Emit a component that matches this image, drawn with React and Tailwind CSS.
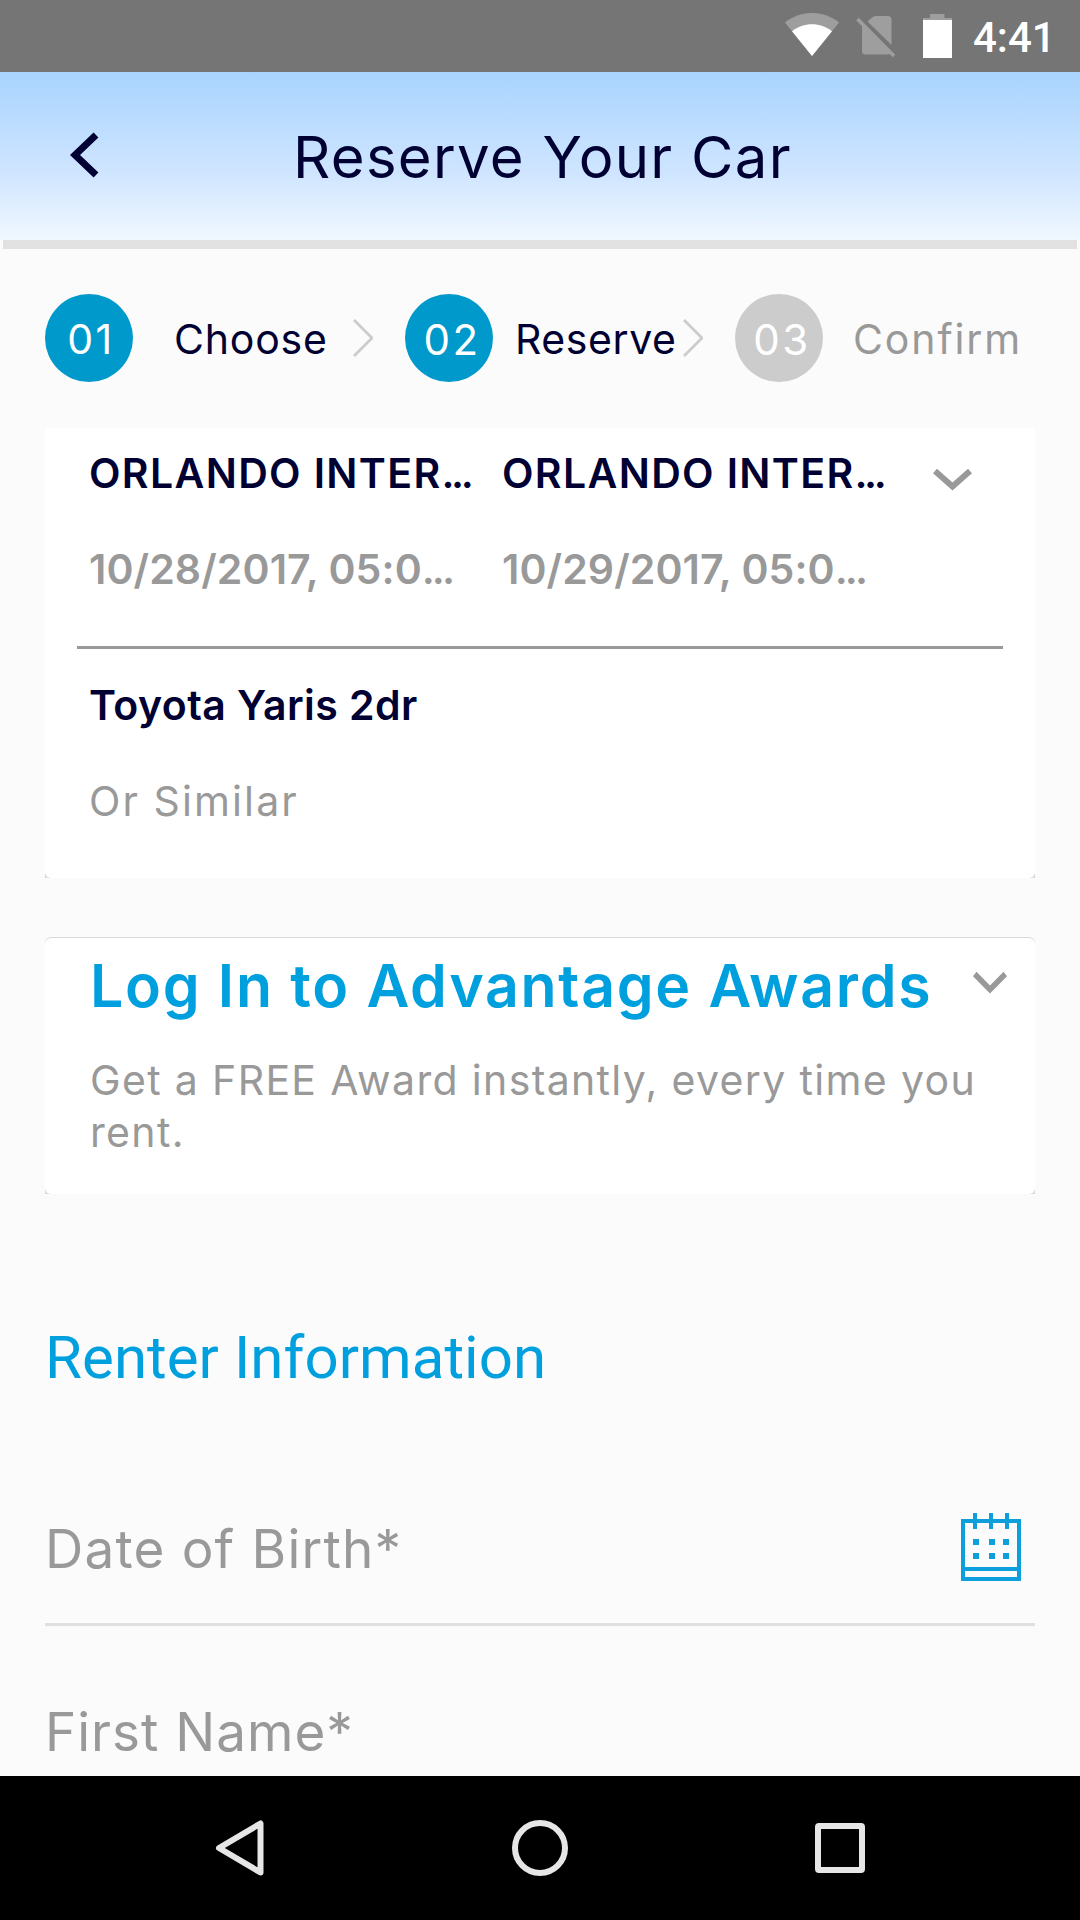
const steps = [
    { id: "01", label: "Choose", active: true, circle: "pl-1 text-[41px] tracking-[2.5px]", text: "ml-[41px] w-[179px] tracking-[0.8px]" },
    { id: "02", label: "Reserve", active: true, circle: "pl-1.5 text-[42px] tracking-[2.5px]", text: "ml-[22px] w-[168px] tracking-[0.57px]" },
    { id: "03", label: "Confirm", active: false, circle: "pl-1.5 text-[42px] tracking-[2.5px]", text: "ml-[30px] tracking-[1.9px]" },
];

const trips = [
    { place: "ORLANDO INTER", date: "10/28/2017, 05:0" },
    { place: "ORLANDO INTER", date: "10/29/2017, 05:0" },
];

function StatusBar() {
    return (
        <div className="h-[72px] bg-[#757575] flex items-center">
            <svg className="ml-[785px] mb-[2px] w-[54px] h-[44px] shrink-0" viewBox="0 0 54 44">
                <path d="M27 43 L0 9.5 C16 -3.2 38 -3.2 54 9.5 Z" fill="#9e9e9e" />
                <path d="M27 43 L7 18.3 C18.5 9 35.5 9 47 18.3 Z" fill="#fff" />
            </svg>

            <svg className="ml-[17px] mt-[2px] w-[40px] h-[42px] shrink-0" viewBox="0 0 40 42">
                <path d="M11.5 5.5 L16 1.5 Q17.5 0 19.5 0 H32 Q35.5 0 35.5 3.5 V29 Z" fill="#9e9e9e" />
                <path d="M6 9 L34 37.5 Q33 38.5 31.5 38.5 H9.5 Q6 38.5 6 35 Z" fill="#9e9e9e" />
                <path d="M1.5 3 L38 40" stroke="#9e9e9e" strokeWidth="3.6" />
            </svg>

            <svg className="ml-[27px] w-[29px] h-[44px] shrink-0" viewBox="0 0 29 44">
                <path d="M7 0 H21.5 V4 H29 V7 H0 V4 H7 Z" fill="#9e9e9e" />
                <rect y="6" width="29" height="38" fill="#fff" />
            </svg>

            <span className="ml-[21px] pt-[3px] font-['Roboto',sans-serif] font-medium text-[42px] leading-[50px] text-white">
                4:41
            </span>
        </div>
    );
}

function Header() {
    return (
        <header>
            <div className="h-[168px] flex items-center bg-linear-to-b from-[#a8d4ff] via-[#cfe5ff] via-60% to-[#f0f8ff]">
                <svg className="ml-[70px] mb-[3px] w-[29px] h-[46px] shrink-0" viewBox="0 0 29 46">
                    <path d="M26 3 L5 23 L26 43" fill="none" stroke="#000033" strokeWidth="7" />
                </svg>
                <h1 className="ml-[194px] pt-[2px] text-[58px] leading-[70px] tracking-[1.3px] whitespace-nowrap">
                    Reserve Your Car
                </h1>
            </div>
            <div className="h-[9px] mx-[3px] bg-[#e2e2e2]"></div>
        </header>
    );
}

function StepBar() {
    return (
        <div className="mt-[45px] h-[88px] pl-[45px] flex items-center">
            {steps.map((step, i) => (
                <div key={step.id} className="flex items-center">
                    {i > 0 && (
                        <svg className="w-[20px] h-[38px] mr-[32px] shrink-0" viewBox="0 0 20 38">
                            <path d="M1 1 L19 19 L1 37" fill="none" stroke="#cccccc" strokeWidth="2.8" />
                        </svg>
                    )}
                    <div className={`w-[88px] h-[88px] shrink-0 rounded-full flex items-center justify-center pt-[3px] text-white ${step.active ? "bg-[#0099cc]" : "bg-[#cccccc]"} ${step.circle}`}>
                        {step.id}
                    </div>
                    <span className={`pt-[2px] text-[41px] leading-[50px] whitespace-nowrap ${step.active ? "" : "text-[#999999]"} ${step.text}`}>
                        {step.label}
                    </span>
                </div>
            ))}
        </div>
    );
}

function ChevronDown({ className }) {
    return (
        <svg className={className} viewBox="0 0 39 22" preserveAspectRatio="none">
            <path d="M2 2 L19.5 17.5 L37 2" fill="none" stroke="#999999" strokeWidth="6" />
        </svg>
    );
}

function TripCard() {
    return (
        <section className="mt-[46px] mx-[45px] h-[450px] bg-[#d9d9d9]">
            <div className="h-full bg-white rounded-b-[6px] pt-5">
                <div className="pl-[44px] flex items-start">
                    {trips.map((trip) => (
                        <div key={trip.date} className="w-[413px] font-semibold text-[41px] leading-[50px] whitespace-nowrap">
                            <p className="tracking-[1.35px]">
                                {trip.place}<span className="tracking-[-3.5px]">...</span>
                            </p>
                            <p className="mt-[46px] tracking-[0.1px] text-[#999999]">
                                {trip.date}<span className="tracking-[-3px]">...</span>
                            </p>
                        </div>
                    ))}
                    <ChevronDown className="ml-[18px] mt-[21px] w-[39px] h-[22px] shrink-0" />
                </div>
                <div className="mt-[52px] mx-[32px] h-[3px] bg-[#999999]"></div>
                <p className="mt-[31px] pl-[44px] font-semibold text-[41px] leading-[50px] tracking-[0.44px]">
                    Toyota Yaris 2dr
                </p>
                <p className="mt-[46px] pl-[44px] text-[41px] leading-[50px] tracking-[2.1px] text-[#999999]">
                    Or Similar
                </p>
            </div>
        </section>
    );
}

function LoginCard() {
    return (
        <section className="mt-[59px] mx-[45px] h-[257px] pt-px bg-[#d9d9d9] rounded-t-[6px]">
            <div className="h-full bg-white rounded-[6px] pt-[13px] pl-[45px]">
                <div className="flex items-start">
                    <h2 className="w-[883px] font-semibold text-[59px] leading-[70px] tracking-[1.7px] whitespace-nowrap text-[#00a0df]">
                        Log In to Advantage Awards
                    </h2>
                    <ChevronDown className="mt-[21px] w-[34px] h-[22px] shrink-0" />
                </div>
                <p className="mt-[33px] w-[900px] text-[41px] leading-[52px] tracking-[1.35px] text-[#999999]">
                    Get a FREE Award instantly, every time you rent.
                </p>
            </div>
        </section>
    );
}

function CalendarIcon() {
    return (
        <svg className="w-[60px] h-[68px] shrink-0" viewBox="0 0 60 68" fill="none" stroke="#0c9fdc">
            <rect x="2" y="8" width="56" height="58" strokeWidth="4" />
            <path d="M2 56 H58 M14 0 V16 M30 0 V16 M46 0 V16" strokeWidth="4" />
            <path d="M12 29 h6 M28 29 h6 M42 29 h6 M12 43 h6 M28 43 h6 M42 43 h6" strokeWidth="6" />
        </svg>
    );
}

function RenterForm() {
    return (
        <section className="pt-[129px] mx-[45px]">
            <h2 className="font-['Roboto',sans-serif] text-[60px] leading-[70px] tracking-[0.05px] text-[#00a0df]">
                Renter Information
            </h2>

            {/* date of birth */}
            <div className="mt-[116px] h-[114px] flex items-start justify-between">
                <label className="mt-[7px] text-[53px] leading-[66px] tracking-[1.2px] text-[#999999]">Date of Birth*</label>
                <div className="mt-1 mr-[14px]">
                    <CalendarIcon />
                </div>
            </div>
            <div className="h-[3px] bg-[#e0e0e0]"></div>

            {/* first name */}
            <div className="mt-[73px]">
                <label className="block text-[53px] leading-[66px] tracking-[1px] text-[#999999]">First Name*</label>
            </div>
        </section>
    );
}

function NavBar() {
    return (
        <nav className="h-[144px] shrink-0 bg-black flex items-center">
            <svg className="ml-[215px] w-[49px] h-[56px]" viewBox="0 0 49 56">
                <path d="M45.5 3.5 V52.5 L4 28 Z" fill="none" stroke="#e6e6e6" strokeWidth="6" strokeLinejoin="round" />
            </svg>
            <div className="ml-[248px] w-[56px] h-[56px] rounded-full border-6 border-[#e6e6e6]"></div>
            <div className="ml-[247px] w-[50px] h-[50px] rounded-[4px] border-6 border-[#e6e6e6]"></div>
        </nav>
    );
}

export default function App() {
    return (
        <div className="w-[1080px] h-[1920px] flex flex-col overflow-hidden bg-[#fbfbfb] text-[#000033] font-['Inter',sans-serif]">
            <main className="h-[1776px] overflow-hidden">
                <StatusBar />
                <Header />
                <StepBar />
                <TripCard />
                <LoginCard />
                <RenterForm />
            </main>
            <NavBar />
        </div>
    );
}
